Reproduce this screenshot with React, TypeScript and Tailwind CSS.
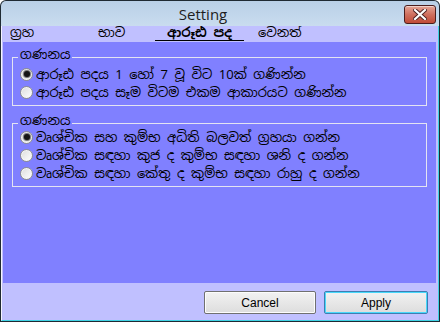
import React from 'react';

const sinhala = "font-['Iskoola_Pota','Noto_Sans_Sinhala','Noto_Sans','DejaVu_Sans',sans-serif]";

const Radio: React.FC<{ checked?: boolean; label: string }> = ({ checked, label }) => (
    <div className="flex items-center h-[18px]">
        <span className="w-[13px] h-[13px] rounded-full border border-[#8e8f8f] bg-gradient-to-br from-[#dcdcdc] to-white shadow-[inset_0_0_0_1px_#f4f4f4] flex items-center justify-center shrink-0">
            {checked && <span className="w-[6px] h-[6px] rounded-full bg-[#151515] shadow-[0_0_1px_1px_#6b6b6b]" />}
        </span>
        <span className={`ml-[3px] text-[13px] text-black leading-none whitespace-nowrap ${sinhala}`}>{label}</span>
    </div>
);

const Group: React.FC<{ title: string; children: React.ReactNode; className: string }> = ({ title, children, className }) => (
    <div className={`relative mx-[9px] border border-[#e4e4f2] pl-[7px] flex flex-col ${className}`}>
        <span className={`absolute -top-[10px] left-[5px] px-[2px] bg-[#8080ff] text-[13px] leading-[13px] text-black ${sinhala}`}>{title}</span>
        {children}
    </div>
);

const App: React.FC = () => {
    const tabs = [
        { name: 'ග්‍රහ', w: 'w-[88px]' },
        { name: 'භාව', w: 'w-[57px]' },
        { name: 'ආරූඪ පද', w: 'w-[103px]', active: true },
        { name: 'වෙනත්', w: 'w-[60px]' },
    ];

    return (
        <div className="w-[440px] h-[322px] bg-[#1f2a33] rounded-t-[6px] p-[1px] flex flex-col">
            <div className="h-[25px] rounded-t-[5px] bg-gradient-to-b from-[#b9d0e7] to-[#c9dcef] relative flex items-center justify-center">
                <span className="text-[15px] text-[#1e1e1e] font-['Open_Sans','Noto_Sans',sans-serif] -ml-[34px] mt-[2px]">Setting</span>
                <button className="absolute right-[3px] top-[4px] w-[32px] h-[19px] rounded-[3px] border border-[#4b1d1d] bg-gradient-to-b from-[#e4a597] via-[#cf6f5e] to-[#c04a38] flex items-center justify-center shadow-[inset_0_1px_0_rgba(255,255,255,0.5)]">
                    <svg width="14" height="11" viewBox="0 0 14 11">
                        <path d="M2 1 L12 10 M12 1 L2 10" stroke="#4b2020" strokeWidth="4" strokeLinecap="square" />
                        <path d="M2 1 L12 10 M12 1 L2 10" stroke="#ffffff" strokeWidth="2.2" strokeLinecap="square" />
                    </svg>
                </button>
            </div>
            <div className="flex-1 flex flex-col bg-[#c0c0ff] border-l border-l-[#f4f4ff] border-r border-r-[#3fd2e4] border-b border-b-[#3fd2e4]">
                <div className="h-[16px] flex items-end pl-[8px]">
                    {tabs.map((t) => (
                        <div key={t.name} className={`${t.w} h-[16px] flex items-start`}>
                            {t.active ? (
                                <span className={`w-[89px] border-b border-black text-center text-[13px] leading-[14px] font-bold text-black ${sinhala}`}>{t.name}</span>
                            ) : (
                                <span className={`text-[13px] leading-[14px] text-black ${sinhala}`}>{t.name}</span>
                            )}
                        </div>
                    ))}
                </div>
                <div className="h-[241px] ml-[1px] mr-[2px] bg-[#8080ff] pt-[15px] flex flex-col">
                    <Group title="ගණනය" className="h-[49px] pt-[7px]">
                        <Radio checked label="ආරූඪ පදය 1 හෝ 7 වූ විට 10ක් ගණින්න" />
                        <Radio label="ආරූඪ පදය සෑම විටම එකම ආකාරයට ගණින්න" />
                    </Group>
                    <Group title="ගණනය" className="mt-[17px] h-[64px] pt-[4px]">
                        <Radio checked label="වෘශ්චික සහ කුම්භ අධිති බලවත් ග්‍රහයා ගන්න" />
                        <Radio label="වෘශ්චික සඳහා කුජ ද කුම්භ සඳහා ශනි ද ගන්න" />
                        <Radio label="වෘශ්චික සඳහා කේතු ද කුම්භ සඳහා රාහු ද ගන්න" />
                    </Group>
                </div>
                <div className="flex-1 flex items-start justify-end pt-[8px] pr-[10px] gap-[8px]">
                    <button className="w-[112px] h-[23px] rounded-[2px] border border-[#707070] bg-gradient-to-b from-[#f2f2f2] to-[#dddddd] shadow-[inset_0_0_0_1px_#fcfcfc] text-[12px] text-black font-['Liberation_Sans',sans-serif]">Cancel</button>
                    <button className="w-[104px] h-[23px] rounded-[2px] border border-[#3c7fb1] bg-gradient-to-b from-[#f2f2f2] to-[#dddddd] shadow-[inset_0_0_0_1px_#48d8fb] text-[12px] text-black font-['Liberation_Sans',sans-serif]">Apply</button>
                </div>
            </div>
        </div>
    );
};

export default App;
